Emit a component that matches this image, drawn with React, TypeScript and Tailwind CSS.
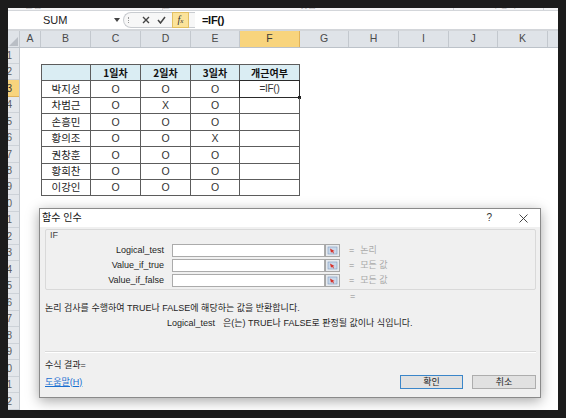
import React from 'react';

const cols: [string, number][] = [
  ['A', 21], ['B', 50], ['C', 50], ['D', 50], ['E', 49], ['F', 60],
  ['G', 49], ['H', 50], ['I', 50], ['J', 49], ['K', 50], ['L', 50],
];

const rowHeights = [16, 16, 17, 16, 17, 16, 17, 16, 16, 17, 16, 17, 16, 17, 16, 17, 16, 17, 16, 17, 16, 17];

const data = [
  ['박지성', 'O', 'O', 'O'],
  ['차범근', 'O', 'X', 'O'],
  ['손흥민', 'O', 'O', 'O'],
  ['황의조', 'O', 'O', 'X'],
  ['권창훈', 'O', 'O', 'O'],
  ['황희찬', 'O', 'O', 'O'],
  ['이강인', 'O', 'O', 'O'],
];

const tableRowH = [16, 17, 16, 17, 16, 17, 16, 16];

const font = { fontFamily: '"Liberation Sans", "Noto Sans CJK KR", sans-serif' };

function RefEditIcon() {
  return (
    <svg width="15" height="13" viewBox="0 0 15 13" className="shrink-0">
      <rect x="0.5" y="0.5" width="14" height="12" fill="#e6eaef" stroke="#a7a7a7" />
      <rect x="3" y="3" width="9" height="7" fill="#c9d8ea" stroke="#7f9bbd" strokeWidth="0.6" />
      <path d="M5 4.5 L9.5 7 L8 7.4 L9 9 L8.2 9.4 L7.2 7.8 L6 8.8 Z" fill="#d8322b" />
    </svg>
  );
}

function ArgRow({ label, value }: { label: string; value: string }) {
  return (
    <div className="flex items-center h-[13px]">
      <div className="w-[118px] text-right text-[9px] text-[#1e1e1e] leading-none">{label}</div>
      <div className="ml-[8px] w-[153px] h-[13px] bg-white border border-[#ababab]" />
      <RefEditIcon />
      <div className="ml-[9px] text-[9px] text-[#8a8a8a] leading-none">=</div>
      <div className="ml-[6px] text-[9px] text-[#a9a9a9] leading-none">{value}</div>
    </div>
  );
}

export default function App() {
  return (
    <div className="w-[566px] h-[418px] bg-[#1c1c1c] pt-[8px] pl-[8px] relative overflow-hidden" style={font}>
      <div className="w-[550px] h-[402px] bg-white overflow-hidden flex flex-col">
        {/* ribbon remnant */}
        <div className="h-[7px] bg-[#f3f4f5] border-b border-[#d3d6da] relative overflow-hidden flex text-[9px] text-[#b5b5b5] leading-none">
          <div className="w-[84px] flex items-end pl-[17px] -mt-[4px]">클립보드</div>
          <div className="w-[70px] flex items-end pl-[70px] -mt-[4px] border-r border-[#cfd2d6]">글꼴</div>
          <div className="w-[291px] flex items-end justify-center -mt-[4px] border-r border-[#cfd2d6]">맞춤</div>
          <div className="w-[90px] flex items-end justify-center -mt-[4px] border-r border-[#cfd2d6]">표시 형식</div>
        </div>

        {/* formula bar */}
        <div className="h-[18px] flex items-center bg-white shrink-0">
          <div className="w-[112px] h-full flex items-center relative">
            <span className="ml-[35px] text-[11px] text-[#222]">SUM</span>
            <svg width="6" height="4" viewBox="0 0 6 4" className="absolute left-[106px] top-[7px]">
              <path d="M0 0 H6 L3 4 Z" fill="#444" />
            </svg>
          </div>
          <div className="ml-[3px] h-[16px] w-[72px] rounded-l-full border border-r-0 border-[#c9ccd0] flex items-center bg-[#f7f7f7]">
            <div className="ml-[4px] w-[2px] h-[6px] border-l border-dotted border-[#9a9a9a]" />
            <svg width="8" height="8" viewBox="0 0 8 8" className="ml-[12px]">
              <path d="M1 1 L7 7 M7 1 L1 7" stroke="#444" strokeWidth="1.4" />
            </svg>
            <svg width="9" height="8" viewBox="0 0 9 8" className="ml-[7px]">
              <path d="M1 4 L3.5 7 L8 1" stroke="#444" strokeWidth="1.5" fill="none" />
            </svg>
            <div className="ml-[6px] w-[17px] h-[16px] bg-[#fbe39a] border border-[#e2c062] flex items-center justify-center">
              <span className="italic text-[10px] text-[#333] leading-none" style={{ fontFamily: '"Liberation Serif", serif' }}>
                f<span className="text-[7px]">x</span>
              </span>
            </div>
          </div>
          <span className="ml-[7px] text-[11px] font-bold text-[#111] tracking-[-0.3px]">=IF()</span>
        </div>
        <div className="h-[2px] bg-[#d3d6da] shrink-0" />

        {/* column header */}
        <div className="h-[17px] flex -ml-[12px] bg-[#dfe3e8] border-b border-[#bcc2c9] shrink-0">
          <div className="w-[24px] shrink-0 border-r border-[#c3c8ce] relative">
            <svg width="9" height="9" viewBox="0 0 9 9" className="absolute right-[1px] bottom-[1px]">
              <path d="M9 0 V9 H0 Z" fill="#b9bec5" />
            </svg>
          </div>
          {cols.map(([l, w]) => (
            <div
              key={l}
              style={{ width: w }}
              className={`shrink-0 flex items-center justify-center text-[10.5px] border-r ${
                l === 'F'
                  ? 'bg-[#f8d47d] text-[#3a3a3a] border-[#e0b25a]'
                  : 'text-[#4a4a4a] border-[#c3c8ce]'
              }`}
            >
              {l}
            </div>
          ))}
        </div>

        {/* sheet body */}
        <div className="flex-1 flex -ml-[12px]">
          <div className="w-[24px] shrink-0 flex flex-col bg-[#e4e7eb] border-r border-[#c3c8ce]">
            {rowHeights.map((h, i) => (
              <div
                key={i}
                style={{ height: h }}
                className={`shrink-0 flex items-center justify-end pr-[7px] text-[10px] border-b ${
                  i === 2 ? 'bg-[#f8d47d] text-[#333] border-[#e0b25a]' : 'text-[#5b5b5b] border-[#cdd2d8]'
                }`}
              >
                {i + 1}
              </div>
            ))}
          </div>

          <div className="pl-[21px] pt-[16px]" style={{ fontFamily: '"Noto Sans CJK KR", "Liberation Sans", sans-serif' }}>
            <div className="grid grid-cols-[49px_50px_50px_49px_60px] border-l border-t border-[#5c5c5c] w-[259px]">
              {['', '1일차', '2일차', '3일차', '개근여부'].map((t, i) => (
                <div
                  key={i}
                  style={{ height: tableRowH[0] }}
                  className="bg-[#daedf3] border-r border-b border-[#5c5c5c] flex items-center justify-center text-[10px] font-bold text-[#111] leading-none"
                >
                  {t}
                </div>
              ))}
              {data.map((r, ri) =>
                [...r, ri === 0 ? '=IF()' : ''].map((t, ci) => (
                  <div
                    key={`${ri}-${ci}`}
                    style={{ height: tableRowH[ri + 1] }}
                    className={`relative border-r border-b border-[#5c5c5c] flex items-center justify-center leading-none ${
                      ci === 0 ? 'text-[10.5px] text-[#222]' : 'text-[10.5px] text-[#333]'
                    }`}
                  >
                    <span style={ci === 0 ? undefined : { fontFamily: '"Liberation Sans", sans-serif' }} className={ci === 4 ? 'text-[10px] tracking-[-0.3px]' : ''}>
                      {t}
                    </span>
                    {ri === 0 && ci === 4 && (
                      <>
                        <div className="absolute -inset-[1px] border border-[#2a2a2a] pointer-events-none" />
                        <div className="absolute -right-[2px] -bottom-[2px] w-[3px] h-[3px] bg-[#222]" />
                      </>
                    )}
                  </div>
                ))
              )}
            </div>
          </div>
        </div>
      </div>

      {/* function arguments dialog */}
      <div
        className="absolute left-[39px] top-[208px] w-[502px] h-[190px] bg-[#f0f0f0] border border-[#8a8a8a] shadow-[0_3px_12px_rgba(0,0,0,0.35)] flex flex-col text-[#1e1e1e]"
        style={{ fontFamily: '"Liberation Sans", "Noto Sans CJK KR", sans-serif' }}
      >
        <div className="h-[18px] bg-white flex items-center shrink-0">
          <span className="ml-[2px] text-[10px] leading-none text-[#111]">함수 인수</span>
          <span className="ml-auto mr-[27px] text-[10px] leading-none text-[#333]">?</span>
          <svg width="9" height="9" viewBox="0 0 9 9" className="mr-[12px]">
            <path d="M0.5 0.5 L8.5 8.5 M8.5 0.5 L0.5 8.5" stroke="#333" strokeWidth="0.9" />
          </svg>
        </div>

        <div className="flex-1 flex flex-col pl-[5px] pr-[4px]">
          <div className="mt-[2px] h-[61px] border border-[#d9d9d9] rounded-[2px] flex flex-col">
            <div className="h-[14px] pl-[4px] pt-[1px] text-[9px] text-[#444] leading-none">IF</div>
            <div className="flex flex-col gap-[2px]">
              <ArgRow label="Logical_test" value="논리" />
              <ArgRow label="Value_if_true" value="모든 값" />
              <ArgRow label="Value_if_false" value="모든 값" />
            </div>
          </div>

          <div className="h-[12px] flex items-center">
            <span className="ml-[305px] text-[9px] text-[#8a8a8a] leading-none">=</span>
          </div>
          <div className="h-[12px] flex items-center text-[9px] leading-none">
            논리 검사를 수행하여 TRUE나 FALSE에 해당하는 값을 반환합니다.
          </div>
          <div className="mt-[3px] h-[12px] flex items-center text-[9px] leading-none">
            <span className="ml-[122px]">Logical_test</span>
            <span className="ml-[8px]">은(는) TRUE나 FALSE로 판정될 값이나 식입니다.</span>
          </div>

          <div className="mt-[22px] h-[2px] border-t border-[#dadada] border-b border-b-white" />

          <div className="mt-[6px] h-[12px] flex items-center text-[9px] leading-none">수식 결과=</div>

          <div className="mt-[4px] flex items-center">
            <span className="text-[9px] leading-none text-[#1a6fd0] underline">도움말(H)</span>
            <div className="ml-auto w-[63px] h-[14px] bg-[#e1e1e1] border border-[#3b86c9] flex items-center justify-center text-[9px] leading-none">
              확인
            </div>
            <div className="ml-[9px] w-[64px] h-[14px] bg-[#e1e1e1] border border-[#adadad] flex items-center justify-center text-[9px] leading-none">
              취소
            </div>
          </div>
        </div>
      </div>
    </div>
  );
}
